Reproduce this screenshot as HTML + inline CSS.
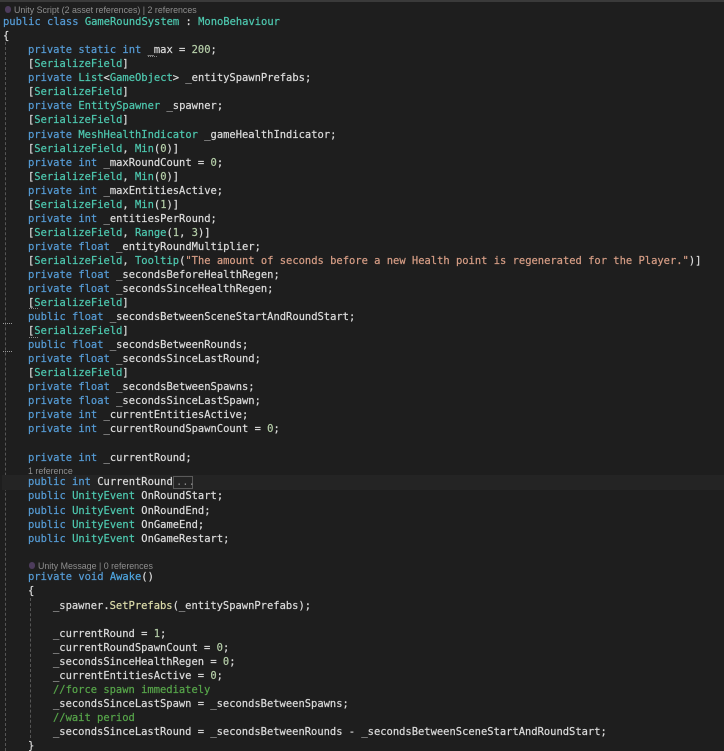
<!DOCTYPE html>
<html><head><meta charset="utf-8"><style>
html,body{margin:0;padding:0;background:#1e1e1e}
#r{position:relative;width:724px;height:751px;overflow:hidden;background:#1e1e1e;font-family:"DejaVu Sans Mono","Liberation Mono",monospace;font-size:10.46px;color:#dcdcdc}
.l{position:absolute;height:14px;line-height:14px;white-space:pre;left:28px;margin-top:1px;-webkit-text-stroke:.2px currentColor}
.a{left:3px}.c{left:53px}
.k{color:#569cd6}.t{color:#4ec9b0}.n{color:#b5cea8}.s{color:#d69d85}.g{color:#57a64a}.m{color:#dcdcaa}.w{color:#4fa6e0}
.h{position:absolute;font-family:"Liberation Sans",sans-serif;font-size:8.85px;line-height:12px;color:#8f8f8f;white-space:pre}
.v{position:absolute;width:0;border-left:1px dashed #555}
.i{position:absolute;width:6px;height:7px;background:#4d3c5c;border-radius:3px}
</style></head><body><div id="r">
<div style="position:absolute;left:0;top:0;width:724px;height:2px;background:#3a3a3a"></div>
<div class="v" style="left:5px;top:42px;height:709px"></div>
<div class="v" style="left:30px;top:598px;height:140px"></div>
<div style="position:absolute;left:2px;top:475px;width:722px;height:15px;background:#242424"></div>
<div style="position:absolute;left:173px;top:476px;width:18px;height:11px;border:1px solid #5a5a5a"></div>

<i class="i" style="left:5px;top:6px"></i>
<div class="h" style="left:14px;top:4px">Unity Script (2 asset references) | 2 references</div>
<div class="l a" style="top:14px"><span class="k">public class</span> <span class="t">GameRoundSystem</span> : <span class="t">MonoBehaviour</span></div>
<div class="l a" style="top:28px">{</div>
<div class="l" style="top:42px"><span class="k">private static int</span> _max = <span class="n">200</span>;</div>
<div class="l" style="top:56px">[<span class="t">SerializeField</span>]</div>
<div class="l" style="top:70px"><span class="k">private</span> <span class="t">List</span>&lt;<span class="t">GameObject</span>&gt; _entitySpawnPrefabs;</div>
<div class="l" style="top:84px">[<span class="t">SerializeField</span>]</div>
<div class="l" style="top:98px"><span class="k">private</span> <span class="t">EntitySpawner</span> _spawner;</div>
<div class="l" style="top:112px">[<span class="t">SerializeField</span>]</div>
<div class="l" style="top:127px"><span class="k">private</span> <span class="t">MeshHealthIndicator</span> _gameHealthIndicator;</div>
<div class="l" style="top:141px">[<span class="t">SerializeField</span>, <span class="t">Min</span>(<span class="n">0</span>)]</div>
<div class="l" style="top:155px"><span class="k">private int</span> _maxRoundCount = <span class="n">0</span>;</div>
<div class="l" style="top:169px">[<span class="t">SerializeField</span>, <span class="t">Min</span>(<span class="n">0</span>)]</div>
<div class="l" style="top:183px"><span class="k">private int</span> _maxEntitiesActive;</div>
<div class="l" style="top:197px">[<span class="t">SerializeField</span>, <span class="t">Min</span>(<span class="n">1</span>)]</div>
<div class="l" style="top:211px"><span class="k">private int</span> _entitiesPerRound;</div>
<div class="l" style="top:225px">[<span class="t">SerializeField</span>, <span class="t">Range</span>(<span class="n">1</span>, <span class="n">3</span>)]</div>
<div class="l" style="top:239px"><span class="k">private float</span> _entityRoundMultiplier;</div>
<div class="l" style="top:253px">[<span class="t">SerializeField</span>, <span class="t">Tooltip</span>(<span class="s">"The amount of seconds before a new Health point is regenerated for the Player."</span>)]</div>
<div class="l" style="top:267px"><span class="k">private float</span> _secondsBeforeHealthRegen;</div>
<div class="l" style="top:281px"><span class="k">private float</span> _secondsSinceHealthRegen;</div>
<div class="l" style="top:295px">[<span class="t">SerializeField</span>]</div>
<div class="l" style="top:309px"><span class="k">public float</span> _secondsBetweenSceneStartAndRoundStart;</div>
<div class="l" style="top:323px">[<span class="t">SerializeField</span>]</div>
<div class="l" style="top:337px"><span class="k">public float</span> _secondsBetweenRounds;</div>
<div class="l" style="top:351px"><span class="k">private float</span> _secondsSinceLastRound;</div>
<div class="l" style="top:365px">[<span class="t">SerializeField</span>]</div>
<div class="l" style="top:379px"><span class="k">private float</span> _secondsBetweenSpawns;</div>
<div class="l" style="top:393px"><span class="k">private float</span> _secondsSinceLastSpawn;</div>
<div class="l" style="top:407px"><span class="k">private int</span> _currentEntitiesActive;</div>
<div class="l" style="top:421px"><span class="k">private int</span> _currentRoundSpawnCount = <span class="n">0</span>;</div>
<div class="l" style="top:450px"><span class="k">private int</span> _currentRound;</div>
<div class="h" style="left:28px;top:465px">1 reference</div>
<div class="l" style="top:474px"><span class="k">public int</span> CurrentRound</div>
<div class="l" style="left:176px;top:474px;color:#8a8a8a;-webkit-text-stroke:0">...</div>
<div class="l" style="top:488px"><span class="k">public</span> <span class="t">UnityEvent</span> OnRoundStart;</div>
<div class="l" style="top:503px"><span class="k">public</span> <span class="t">UnityEvent</span> OnRoundEnd;</div>
<div class="l" style="top:517px"><span class="k">public</span> <span class="t">UnityEvent</span> OnGameEnd;</div>
<div class="l" style="top:531px"><span class="k">public</span> <span class="t">UnityEvent</span> OnGameRestart;</div>
<i class="i" style="left:29px;top:562px"></i>
<div class="h" style="left:38px;top:560px">Unity Message | 0 references</div>
<div class="l" style="top:569px"><span class="k">private void</span> <span class="w">Awake</span>()</div>
<div class="l" style="top:583px">{</div>
<div class="l c" style="top:598px">_spawner.<span class="m">SetPrefabs</span>(_entitySpawnPrefabs);</div>
<div class="l c" style="top:626px">_currentRound = <span class="n">1</span>;</div>
<div class="l c" style="top:640px">_currentRoundSpawnCount = <span class="n">0</span>;</div>
<div class="l c" style="top:654px">_secondsSinceHealthRegen = <span class="n">0</span>;</div>
<div class="l c" style="top:668px">_currentEntitiesActive = <span class="n">0</span>;</div>
<div class="l c g" style="top:682px">//force spawn immediately</div>
<div class="l c" style="top:696px">_secondsSinceLastSpawn = _secondsBetweenSpawns;</div>
<div class="l c g" style="top:710px">//wait period</div>
<div class="l c" style="top:724px">_secondsSinceLastRound = _secondsBetweenRounds - _secondsBetweenSceneStartAndRoundStart;</div>
<div class="l" style="top:738px">}</div>
<div style="position:absolute;left:3px;top:323px;width:9px;border-top:1px dotted #999"></div>
<div style="position:absolute;left:3px;top:351px;width:9px;border-top:1px dotted #999"></div>
<div style="position:absolute;left:29px;top:308px;width:9px;border-top:1px dotted #888"></div>
<div style="position:absolute;left:29px;top:337px;width:9px;border-top:1px dotted #888"></div>
<div style="position:absolute;left:148px;top:56px;width:9px;border-top:1px dotted #888"></div>
</div></body></html>
